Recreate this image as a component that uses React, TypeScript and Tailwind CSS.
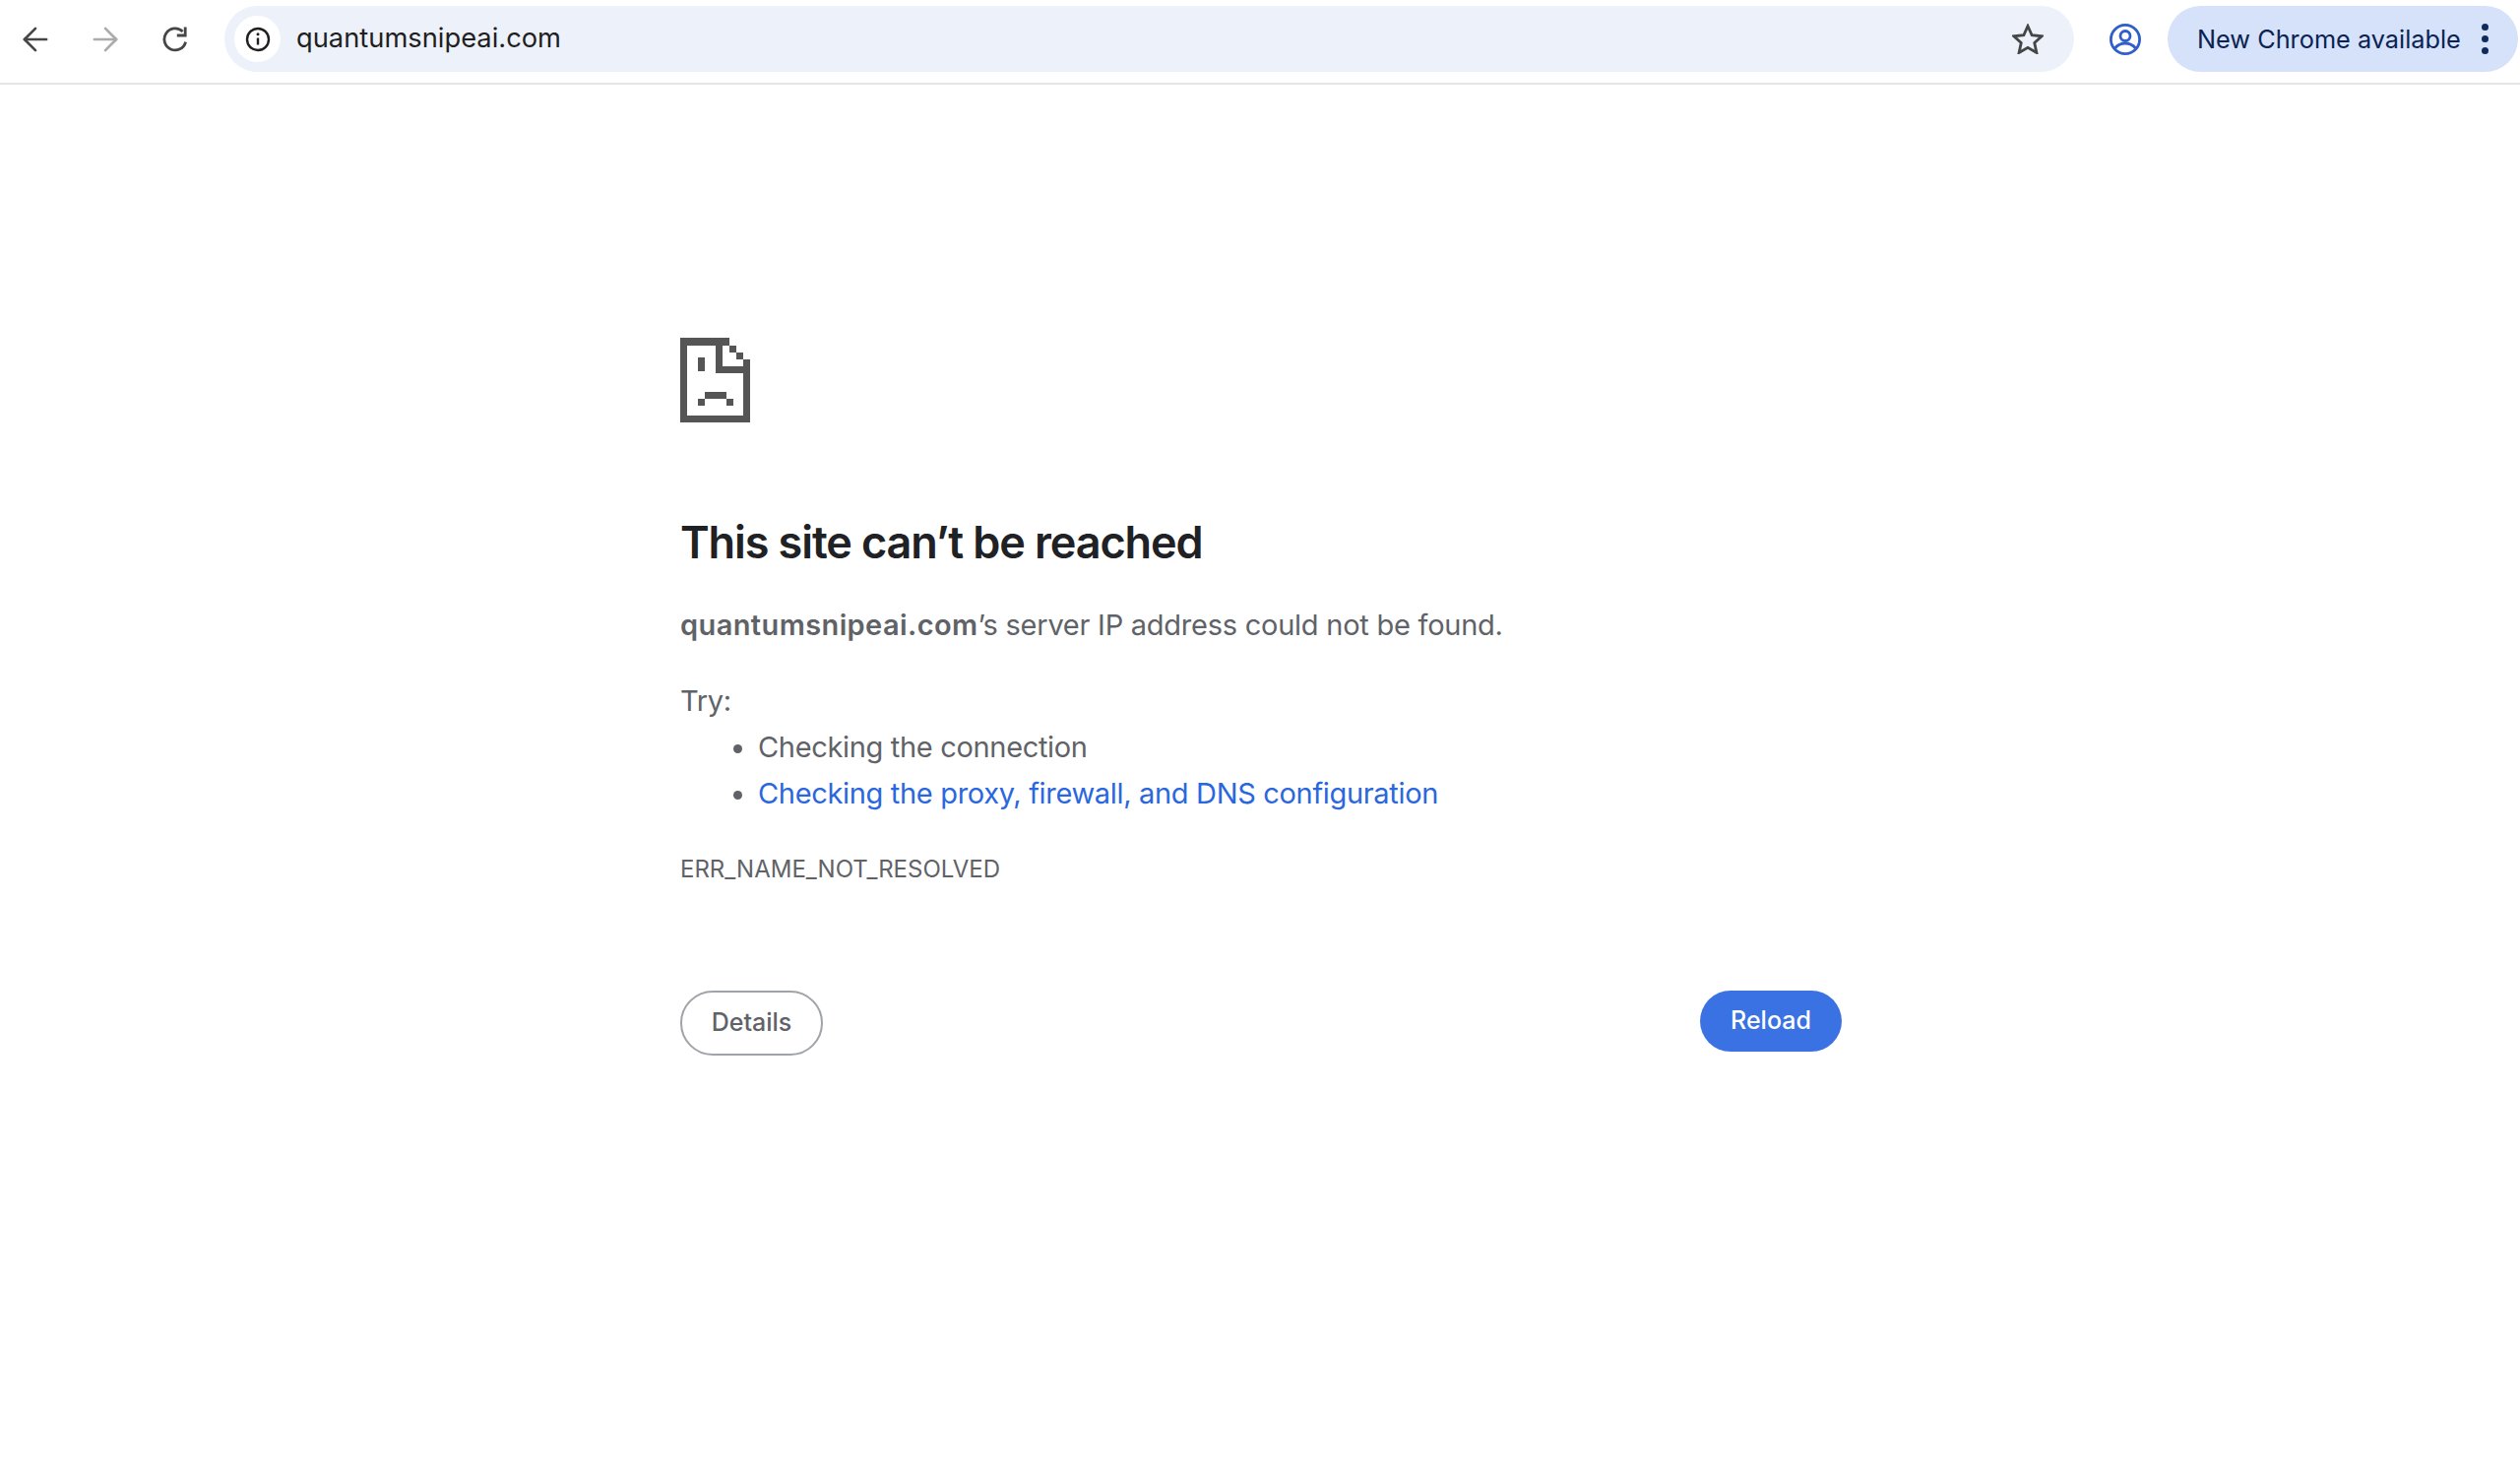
import { ArrowLeft, ArrowRight } from 'lucide-react';

const font = "font-['Inter','Liberation_Sans',sans-serif]";

// Chrome's pixel-art sad document, cell coordinates taken from the screenshot
const SadDoc = () => (
  <svg width="71" height="86" viewBox="0 0 10 12" fill="#555555" shapeRendering="crispEdges" className="block">
    <rect x="0" y="0" width="7" height="1" />
    <rect x="0" y="0" width="1" height="12" />
    <rect x="0" y="11" width="10" height="1" />
    <rect x="9" y="3" width="1" height="9" />
    <rect x="5" y="0" width="1" height="5" />
    <rect x="5" y="4" width="5" height="1" />
    <rect x="7" y="1" width="1" height="1" />
    <rect x="8" y="2" width="1" height="1" />
    <rect x="2.55" y="2.8" width="1" height="2" />
    <rect x="3.55" y="7.65" width="3" height="1" />
    <rect x="2.55" y="8.65" width="1" height="1" />
    <rect x="6.55" y="8.65" width="1" height="1" />
  </svg>
);

const ReloadIcon = () => (
  <svg width="26" height="26" viewBox="0 0 26 26" fill="none" stroke="#444746" strokeWidth="2.8">
    <path d="M23.6 15.600A11 11 0 1 1 20.600 5" />
    <path d="M23.200 0.600v8.400h-8.400" fill="none" />
  </svg>
);

const InfoIcon = () => (
  <svg width="26" height="26" viewBox="0 0 26 26" fill="none" stroke="#1f1f1f" strokeWidth="2.4">
    <circle cx="13" cy="13" r="11" />
    <path d="M13 11.5v7" />
    <circle cx="13" cy="7.8" r="1.5" fill="#1f1f1f" stroke="none" />
  </svg>
);

const StarIcon = () => (
  <svg width="32" height="31" viewBox="2.500 2 27 26" fill="none" stroke="#444746" strokeWidth="2.400" strokeLinejoin="miter">
    <path d="M16 4l3.500 7.800 8.500.9-6.300 5.700 1.800 8.400L16 22.500l-7.500 4.300 1.800-8.400L4 12.700l8.500-.9z" />
  </svg>
);

const AvatarIcon = () => (
  <svg width="34" height="34" viewBox="0 0 34 34" fill="none" stroke="#2f5fcb" strokeWidth="2.8">
    <circle cx="17" cy="17" r="14.6" />
    <circle cx="17" cy="13.5" r="5" />
    <path d="M6.5 26c3-3.6 6.6-5 10.500-5s7.500 1.400 10.500 5" />
  </svg>
);

export default function App() {
  return (
    <div className={`${font} min-h-[1501px] bg-white`}>
      <header className="flex h-[86px] items-center border-b-2 border-[#e6e6e6] pb-[11px] pt-[6px]">
        <button className="flex w-[71px] justify-center text-[#444746]">
          <ArrowLeft size={38} strokeWidth={1.7} />
        </button>
        <button className="flex w-[71px] justify-center text-[#a9abad]">
          <ArrowRight size={38} strokeWidth={1.7} />
        </button>
        <button className="flex w-[71px] justify-center">
          <ReloadIcon />
        </button>

        <div className="ml-[15px] flex h-[67px] flex-1 items-center rounded-full bg-[#edf2fa] pl-[10px] pr-[31px]">
          <div className="flex h-[47px] w-[47px] items-center justify-center rounded-full bg-white">
            <InfoIcon />
          </div>
          <span className="ml-[16px] flex-1 text-[27.3px] text-[#1f1f1f]">quantumsnipeai.com</span>
          <StarIcon />
        </div>

        <div className="flex w-[95px] justify-center pl-[8px]">
          <AvatarIcon />
        </div>

        <div className="mr-[2px] flex h-[67px] w-[356px] items-center rounded-full bg-[#d6e2fa] pl-[30px] text-[#0a2352]">
          <span className="text-[25.3px]">New Chrome available</span>
          <div className="ml-[21px] flex flex-col gap-[5px]">
            <span className="h-[7px] w-[7px] rounded-full bg-[#0f2a5c]" />
            <span className="h-[7px] w-[7px] rounded-full bg-[#0f2a5c]" />
            <span className="h-[7px] w-[7px] rounded-full bg-[#0f2a5c]" />
          </div>
        </div>
      </header>

      <main className="box-content w-[1180px] pl-[691px] pt-[257px]">
        <SadDoc />
        <h1 className="mt-[92px] text-[45px] font-semibold leading-[60px] tracking-[-1.1px] text-[#202124]">This site can’t be reached</h1>
        <p className="mt-[30px] text-[29px] leading-[48px] tracking-[-0.25px] text-[#5f6368]">
          <strong className="font-semibold tracking-[0.4px]">quantumsnipeai.com</strong>’s server IP address could not be found.
        </p>
        <p className="mt-[29px] text-[29px] leading-[47px] tracking-[-0.33px] text-[#5f6368]">Try:</p>
        <ul className="list-disc pl-[79px] text-[29px] leading-[47px] tracking-[-0.33px] text-[#5f6368]">
          <li>Checking the connection</li>
          <li>
            <a className="text-[#2a67de]">Checking the proxy, firewall, and DNS configuration</a>
          </li>
        </ul>
        <div className="mt-[36px] text-[24px] leading-[36px] text-[#5f6368]">ERR_NAME_NOT_RESOLVED</div>
        <div className="mt-[105px] flex items-start justify-between">
          <button className="h-[66px] w-[145px] rounded-full border-2 border-[#a0a3a7] text-[25px] font-medium text-[#5f6368]">
            Details
          </button>
          <button className="h-[62px] w-[144px] rounded-full bg-[#3b72e3] text-[25px] font-medium text-white">
            Reload
          </button>
        </div>
      </main>
    </div>
  );
}
